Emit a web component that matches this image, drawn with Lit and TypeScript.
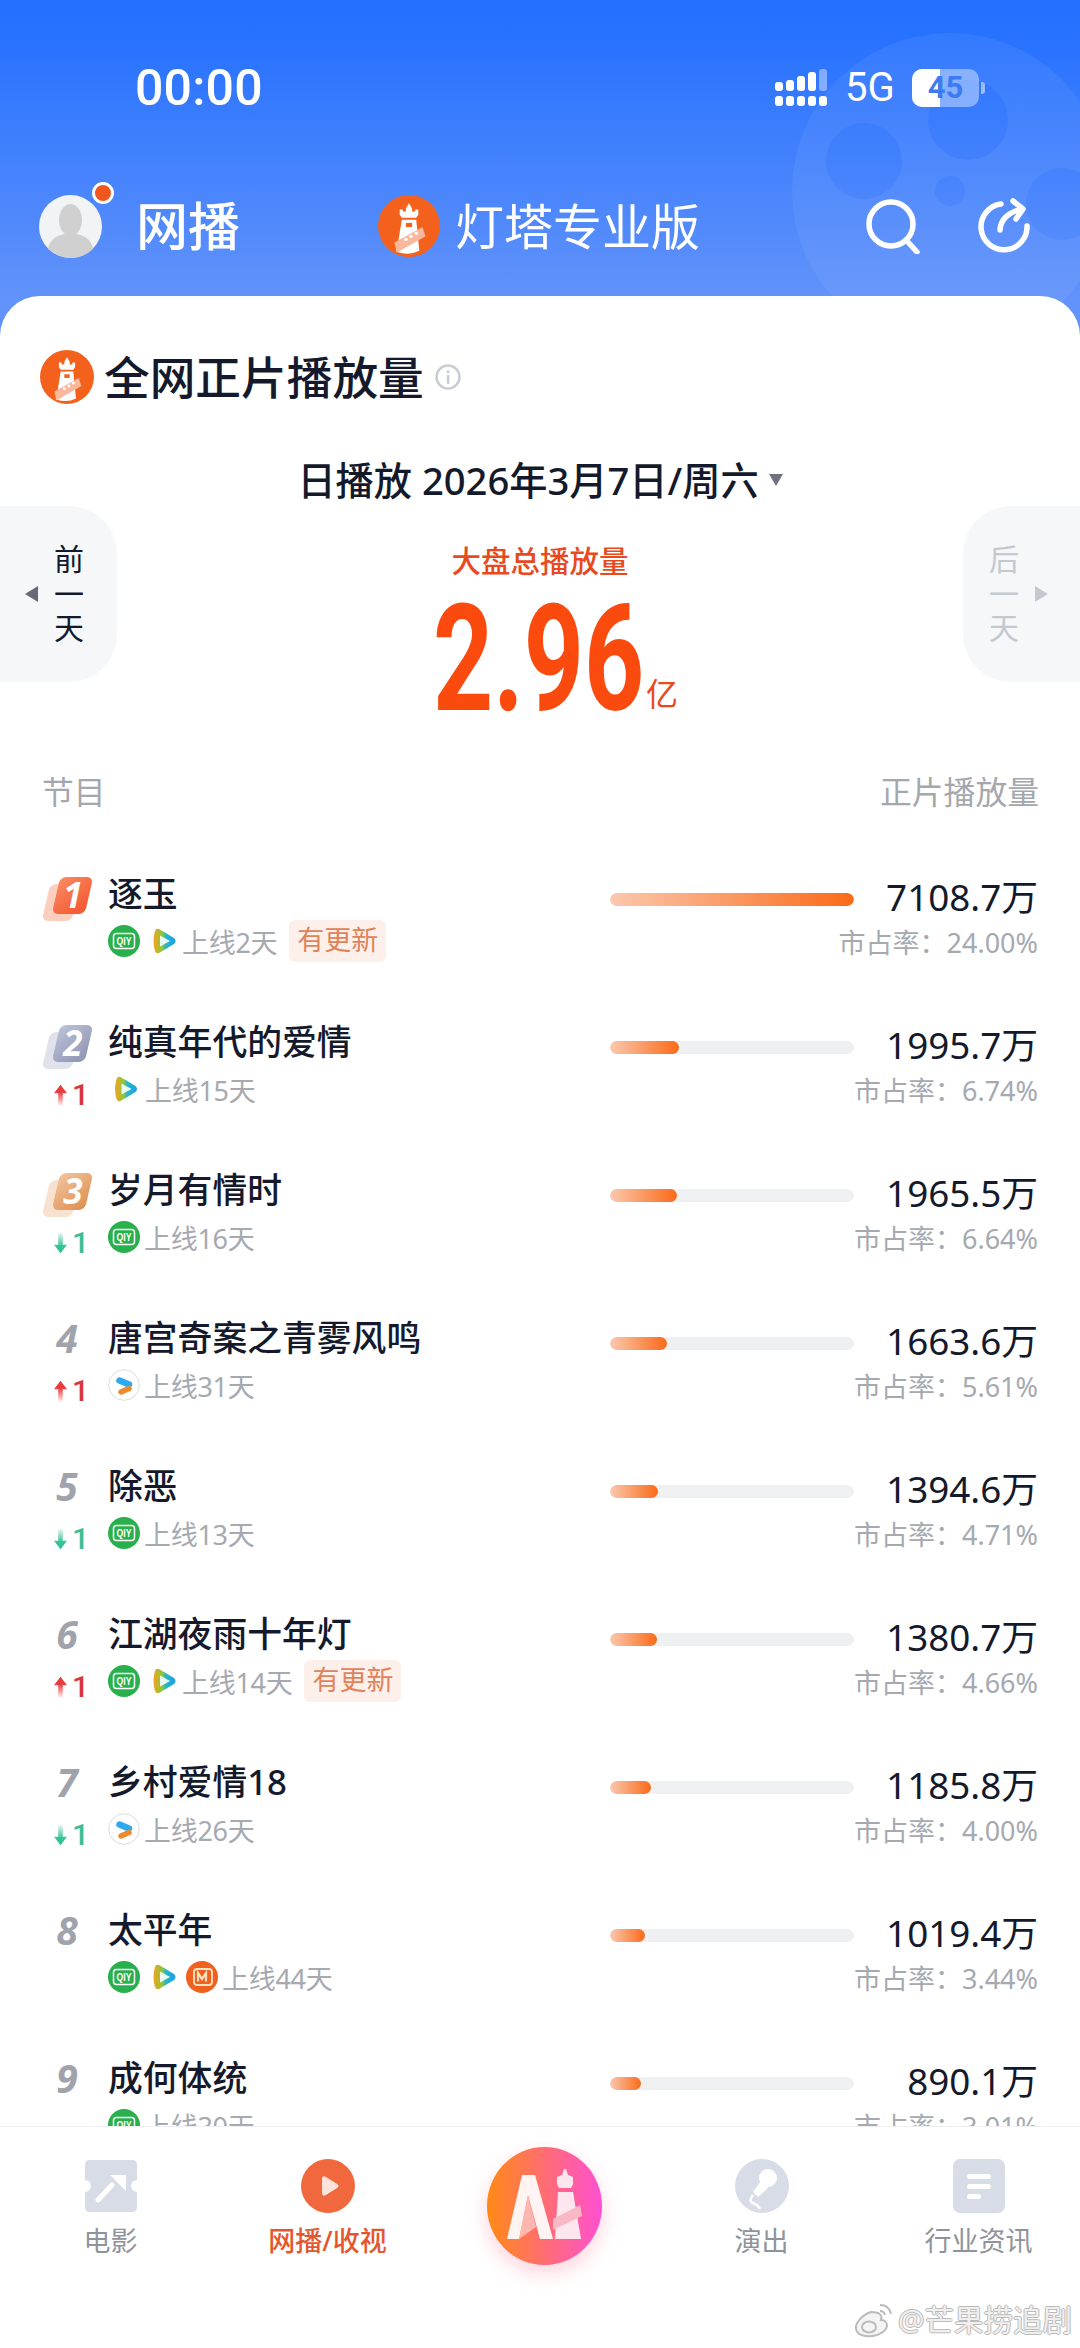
import { LitElement, html, css, svg } from "lit";
import { customElement } from "lit/decorators.js";

type Delta = "up" | "down" | "";
interface Row { rank: number; title: string; icons: string[]; days: number; update?: boolean; delta: Delta; value: number; share: string; }

const rows: Row[] = [
  { rank: 1, title: "逐玉", icons: ["q", "t"], days: 2, update: true, delta: "", value: 7108.7, share: "24.00%" },
  { rank: 2, title: "纯真年代的爱情", icons: ["t"], days: 15, delta: "up", value: 1995.7, share: "6.74%" },
  { rank: 3, title: "岁月有情时", icons: ["q"], days: 16, delta: "down", value: 1965.5, share: "6.64%" },
  { rank: 4, title: "唐宫奇案之青雾风鸣", icons: ["y"], days: 31, delta: "up", value: 1663.6, share: "5.61%" },
  { rank: 5, title: "除恶", icons: ["q"], days: 13, delta: "down", value: 1394.6, share: "4.71%" },
  { rank: 6, title: "江湖夜雨十年灯", icons: ["q", "t"], days: 14, update: true, delta: "up", value: 1380.7, share: "4.66%" },
  { rank: 7, title: "乡村爱情18", icons: ["y"], days: 26, delta: "down", value: 1185.8, share: "4.00%" },
  { rank: 8, title: "太平年", icons: ["q", "t", "m"], days: 44, delta: "", value: 1019.4, share: "3.44%" },
  { rank: 9, title: "成何体统", icons: ["q"], days: 30, delta: "", value: 890.1, share: "3.01%" },
];

const lighthouse = (cls: string) => html`<svg class=${cls} viewBox="0 0 60 60">
  <circle cx="30" cy="30" r="30" fill="#f4611c"/>
  <path d="M21 19V14h3v2h3v-3l3-5 3 5v3h3v-2h3v5l-2 3H23z" fill="#fff"/>
  <path d="M23 24h14l3 30q-10 5-22 1z" fill="#fff"/>
  <path d="M16 46l27-15 3 9-28 16z" fill="#f9b79b"/>
  <circle cx="27" cy="43" r="1.6" fill="#fff"/><circle cx="32" cy="40" r="1.6" fill="#fff"/><circle cx="37" cy="37" r="1.6" fill="#fff"/>
  <rect x="27" y="27" width="6" height="4" fill="#f4611c"/>
</svg>`;

const iqiyi = html`<svg class="pf" viewBox="0 0 32 32"><circle cx="16" cy="16" r="16" fill="#27b04b"/>
  <rect x="5.500" y="8.500" width="21" height="15" rx="3" fill="none" stroke="#fff" stroke-width="1.500"/>
  <text x="16" y="20.300" text-anchor="middle" font-size="11" font-weight="700" font-family="Liberation Sans" fill="#fff" textLength="15" lengthAdjust="spacingAndGlyphs">QIY</text></svg>`;
const tencent = (solo: boolean) => html`<svg class="pf tx ${solo ? "solo" : ""}" viewBox="0 0 30 32">
  <defs><linearGradient id="txg" x1="0" x2="1" y1="0" y2="0"><stop offset="0" stop-color="#f6a21e"/><stop offset=".4" stop-color="#8cc83c"/><stop offset=".55" stop-color="#26b6c8"/><stop offset="1" stop-color="#1e9fe8"/></linearGradient></defs>
  <path d="M7 6q1-3 4-2l15 9q3 3 0 6l-15 9q-3 1-4-2q-3-10 0-20z" fill="url(#txg)"/>
  <path d="M12 10.500l10 5.500-10 5.500z" fill="#eafaf0"/></svg>`;
const youku = html`<svg class="pf" viewBox="0 0 32 32"><circle cx="16" cy="16" r="15.300" fill="#fff" stroke="#dcdcdc" stroke-width="1"/>
  <path d="M11.500 11.500L21 15.500" stroke="#2fa9ee" stroke-width="6.500" stroke-linecap="round"/>
  <path d="M21 19.500L13 23" stroke="#ef8a2c" stroke-width="5.500" stroke-linecap="round"/></svg>`;
const mango = html`<svg class="pf" viewBox="0 0 32 32"><circle cx="16" cy="16" r="16" fill="#f0601e"/>
  <path d="M8 11q0-3 3-3h12q3 0 3 3v10q0 3-3 3H12q-4 0-4-3z" fill="none" stroke="#ffe2c4" stroke-width="1.800"/>
  <path d="M12 20.500V12l4 6 4-6v8.500" fill="none" stroke="#ffe2c4" stroke-width="2.200"/></svg>`;

const reel = svg`<path fill-rule="evenodd" fill="#fff" fill-opacity=".06" d="M158 0a158 158 0 1 0 0 316a158 158 0 1 0 0-316zM176 47a40 40 0 1 1 0 80a40 40 0 1 1 0-80zM72 90a38 38 0 1 1 0 76a38 38 0 1 1 0-76zM158 143a15 15 0 1 1 0 30a15 15 0 1 1 0-30zM270 135a36 36 0 1 1 0 72a36 36 0 1 1 0-72z"/>`;

const arrow = (dir: Delta) => html`<svg class="arrow" viewBox="0 0 14 22">
  <defs>
    <linearGradient id="ua" x1="0" x2="0" y1="0" y2="1"><stop offset=".35" stop-color="#e8393c"/><stop offset="1" stop-color="#e8393c" stop-opacity=".1"/></linearGradient>
    <linearGradient id="da" x1="0" x2="0" y1="1" y2="0"><stop offset=".35" stop-color="#35c296"/><stop offset="1" stop-color="#35c296" stop-opacity=".1"/></linearGradient>
  </defs>
  ${dir === "up"
    ? svg`<path d="M7 0l7 9H9.500v13h-5V9H0z" fill="url(#ua)"/>`
    : svg`<path d="M7 22l7-9H9.500V0h-5v13H0z" fill="url(#da)"/>`}
</svg>`;

@customElement("app-root")
export class AppRoot extends LitElement {
  static styles = css`
    :host { display: block; width: 1080px; height: 2348px; overflow: hidden; font-family: "Noto Sans", "Noto Sans CJK SC", sans-serif; }
    * { box-sizing: border-box; }
    .page { position: relative; width: 1080px; height: 2348px; display: flex; flex-direction: column; overflow: hidden; background: linear-gradient(#2570ff 0, #2872ff 40px, #6293fa 300px, #6293fa 340px) no-repeat; background-size: 100% 340px; }
    .head { flex: 0 0 296px; position: relative; color: #fff; padding-top: 68px; }
    .reel { position: absolute; left: 792px; top: 33px; width: 316px; height: 316px; }
    .status { position: relative; display: flex; align-items: center; height: 40px; padding: 0 95px 0 135px; }
    .time { font: 500 50px/40px Roboto, sans-serif; letter-spacing: .2px; }
    .sright { margin-left: auto; display: flex; align-items: center; }
    .signal { width: 52px; height: 38px; margin-right: 2px; }
    .fiveg { font: 400 40px/40px Roboto, sans-serif; margin-left: 16px; width: 51px; }
    .batt { position: relative; margin-left: 16px; width: 67px; height: 38px; border-radius: 10px; overflow: hidden; background: rgba(255,255,255,.4); }
    .battfill { width: 28px; height: 100%; background: #fff; }
    .batt span { position: absolute; inset: 0; text-align: center; font: 700 31px/38px Roboto, sans-serif; color: #3d7cf0; }
    .cap { width: 4px; height: 12px; margin-left: 2px; background: rgba(255,255,255,.5); border-radius: 0 3px 3px 0; }
    .top { position: relative; display: flex; align-items: center; height: 70px; margin-top: 83px; padding: 0 49px 0 39px; }
    .avatar { position: relative; width: 63px; height: 63px; flex: none; }
    .avatar svg { width: 63px; height: 63px; display: block; }
    .dot { position: absolute; right: -12px; top: -13px; width: 22px; height: 22px; border-radius: 50%; background: #f0561e; border: 3px solid #fff; }
    .tname { font-size: 52px; line-height: 70px; margin-left: 34px; width: 104px; font-weight: 500; letter-spacing: 0; white-space: nowrap; }
    .brand { display: flex; align-items: center; margin-left: 138px; }
    .brandlogo { width: 62px; height: 62px; display: block; }
    .bname { font-size: 49px; line-height: 70px; margin-left: 15px; white-space: nowrap; font-weight: 400; }
    .tools { margin-left: auto; display: flex; gap: 57px; }
    .tool { width: 54px; height: 56px; display: block; }
    .card { flex: 1; min-height: 0; background: #fff; border-radius: 40px 40px 0 0; overflow: hidden; position: relative; padding-top: 54px; }
    .ctitle { display: flex; align-items: center; height: 54px; padding-left: 40px; }
    .ctlogo { width: 54px; height: 54px; display: block; }
    .ct { font-size: 45.700px; font-weight: 500; color: #141a2c; margin-left: 10px; line-height: 54px; white-space: nowrap; }
    .info { width: 26px; height: 26px; margin-left: 11px; display: block; }
    .date { display: flex; justify-content: center; align-items: center; height: 44px; margin-top: 54px; color: #141a2c; font-size: 38.200px; font-weight: 500; line-height: 44px; white-space: pre; }
    .tri { width: 14px; height: 14px; margin-left: 10px; display: block; }
    .hero { display: flex; align-items: flex-start; margin-top: 4px; height: 216px; }
    .tab { flex: none; width: 117px; height: 176px; background: #f6f7f9; display: flex; align-items: center; }
    .tab.l { border-radius: 0 48px 48px 0; padding-left: 25px; gap: 16px; color: #141a2c; }
    .tab.r { border-radius: 48px 0 0 48px; padding-left: 26px; gap: 16px; color: #c4c8cf; }
    .tab svg { width: 13px; height: 16px; display: block; }
    .chars { width: 30px; font-size: 30px; line-height: 34.500px; text-align: center; display: flex; flex-direction: column; }
    .mid { flex: 1; display: flex; flex-direction: column; align-items: center; padding-top: 35px; color: #e8491d; }
    .mlabel { font-size: 29.500px; line-height: 40px; white-space: nowrap; font-weight: 500; }
    .numrow { display: grid; grid-template-columns: 1fr 208px 1fr; width: 100%; margin-top: 13px; height: 130px; }
    .num { grid-column: 2; width: 208px; margin-left: -3px; font: 700 149px/130px Roboto, sans-serif; color: #fb4a0e; white-space: nowrap; transform: scaleX(.705); transform-origin: left center; letter-spacing: 0; }
    .yi { grid-column: 3; align-self: end; font-size: 32px; line-height: 36px; padding-left: 2px; margin-bottom: 12px; }
    .lhead { display: flex; justify-content: space-between; height: 44px; margin-top: 48px; padding: 0 41px 0 42px; color: #a4a7ae; line-height: 44px; font-size: 31.800px; }
    .list { margin-top: 57px; }
    .row { height: 148px; padding: 0 42px; display: grid; grid-template-columns: 66px 1fr 244px 184px; grid-template-rows: 46px 48px; }
    .rank { grid-row: 1; grid-column: 1; position: relative; display: flex; align-items: center; }
    .rnum { width: 50px; text-align: center; font: italic 700 39px/46px "Open Sans", sans-serif; color: #a0a3ab; }
    .badge { position: relative; width: 52px; height: 44px; margin-top: 10px; }
    .back, .front { position: absolute; top: 0; border-radius: 6px; transform: skewX(-13deg); }
    .front { left: 14px; width: 33px; height: 37px; }
    .back { left: 4px; top: 7px; width: 30px; height: 37px; opacity: .45; }
    .bn { position: absolute; left: 16px; top: -1px; width: 30px; text-align: center; font: italic 700 35px/38px "Open Sans", sans-serif; color: #fff; }
    .delta { grid-row: 2; grid-column: 1; display: flex; align-items: center; padding-left: 12px; height: 48px; gap: 5px; font: 500 30px/48px Roboto, sans-serif; margin-top: 6px; }
    .arrow { width: 13px; height: 22px; display: block; }
    .delta.up { color: #d9363e; } .delta.down { color: #3cbf94; }
    .title { grid-row: 1; grid-column: 2; font-size: 34.800px; font-weight: 500; color: #141a2c; line-height: 46px; white-space: nowrap; }
    .sub { grid-row: 2; grid-column: 2; display: flex; align-items: center; gap: 8px; font-size: 27px; color: #a6a9b0; white-space: nowrap; }
    .pf { width: 32px; height: 32px; display: block; flex: none; }
    .tx { width: 30px; }
    .tx.solo { width: 33px; }
    .days { margin-left: -4px; letter-spacing: -.3px; }
    .pill { margin-left: 4px; height: 42px; padding: 0 8px; line-height: 40px; border-radius: 6px; background: #fdf0ea; color: #e0835a; }
    .bar { grid-row: 1; grid-column: 3; align-self: center; margin-top: 10px; height: 13px; border-radius: 7px; background: #eff0f2; overflow: hidden; }
    .fill { height: 100%; border-radius: 7px; background: linear-gradient(90deg, #fbc8ae, #fa6a18); }
    .val { grid-row: 1; grid-column: 4; text-align: right; font-size: 36.800px; line-height: 46px; color: #141a2c; padding-top: 3px; white-space: nowrap; }
    .share { grid-row: 2; grid-column: 3 / 5; text-align: right; font-size: 27px; line-height: 48px; padding-top: 2px; color: #a6a9b0; white-space: nowrap; }
    .nav { flex: 0 0 222px; position: relative; background: #fff; border-top: 1px solid #eceef0; display: grid; grid-template-columns: repeat(5, 217px); margin: 0; padding-left: 2px; }
    .item { display: flex; flex-direction: column; align-items: center; padding-top: 32px; font-size: 27px; line-height: 36px; color: #8f939c; white-space: nowrap; }
    .item svg { width: 54px; height: 54px; display: block; margin-bottom: 10px; }
    .item.on { color: #e4572e; font-weight: 500; }
    .item.ai { padding-top: 20px; }
    .item.ai svg { width: 115px; height: 118px; filter: drop-shadow(0 8px 10px rgba(255,110,140,.3)); }
    .wm { position: absolute; right: 8px; bottom: 8px; display: flex; align-items: center; gap: 4px; font-size: 29.500px; line-height: 40px; color: #f0eeee; text-shadow: -1px 0 #bbb, 1px 0 #bbb, 0 -1px #bbb, 0 1px #bbb; white-space: nowrap; }
    .wm svg { width: 40px; height: 36px; display: block; }
  `;

  private rowTpl(r: Row) {
    const colors: Record<number, [string, string]> = {
      1: ["linear-gradient(135deg,#f98a62,#f4552e)", "#f9926f"],
      2: ["linear-gradient(135deg,#bcc2d6,#8e94b2)", "#b8bdd2"],
      3: ["linear-gradient(135deg,#f2c49c,#dd8e52)", "#f0bd92"],
    };
    const c = colors[r.rank];
    return html`<div class="row">
      <div class="rank">
        ${c
          ? html`<div class="badge"><div class="back" style="background:${c[1]}"></div><div class="front" style="background:${c[0]}"></div><div class="bn">${r.rank}</div></div>`
          : html`<div class="rnum">${r.rank}</div>`}
      </div>
      ${r.delta ? html`<div class="delta ${r.delta}">${arrow(r.delta)}<span>1</span></div>` : ""}
      <div class="title">${r.title}</div>
      <div class="sub">
        ${r.icons.map((i) => i === "q" ? iqiyi : i === "t" ? tencent(r.icons.length === 1) : i === "y" ? youku : mango)}
        <span class="days">上线${r.days}天</span>
        ${r.update ? html`<span class="pill">有更新</span>` : ""}
      </div>
      <div class="bar"><div class="fill" style="width:${(r.value / 7108.7) * 100}%"></div></div>
      <div class="val">${r.value.toFixed(1)}万</div>
      <div class="share">市占率：${r.share}</div>
    </div>`;
  }

  render() {
    return html`<div class="page">
      <div class="head">
        <svg class="reel" viewBox="0 0 316 316">${reel}</svg>
        <div class="status">
          <span class="time">00:00</span>
          <div class="sright">
            <svg class="signal" viewBox="0 0 52 38" fill="#fff">
              <rect x="0" y="13" width="8" height="9" rx="3"/><rect x="0" y="27" width="8" height="10" rx="3"/>
              <rect x="11" y="11" width="8" height="11" rx="3"/><rect x="11" y="27" width="8" height="10" rx="3"/>
              <rect x="22" y="7" width="8" height="15" rx="3"/><rect x="22" y="27" width="8" height="10" rx="3"/>
              <rect x="33" y="3" width="8" height="19" rx="3"/><rect x="33" y="27" width="8" height="10" rx="3"/>
              <rect x="44" y="0" width="8" height="22" rx="3" fill-opacity=".4"/><rect x="44" y="27" width="8" height="10" rx="3"/>
            </svg>
            <span class="fiveg">5G</span>
            <div class="batt"><div class="battfill"></div><span>45</span></div>
            <div class="cap"></div>
          </div>
        </div>
        <div class="top">
          <div class="avatar">
            <svg viewBox="0 0 63 63"><circle cx="31.500" cy="31.500" r="31.500" fill="#f2f3f4"/><ellipse cx="31.500" cy="25" rx="11.500" ry="16" fill="#d0d0d0"/><path d="M9 54q2-12 16-15h13q14 3 16 15q-10 9-22 9t-23-9z" fill="#d0d0d0"/></svg>
            <div class="dot"></div>
          </div>
          <span class="tname">网播</span>
          <div class="brand">${lighthouse("brandlogo")}<span class="bname">灯塔专业版</span></div>
          <div class="tools">
            <svg class="tool" viewBox="0 0 54 56" fill="none" stroke="#fff" stroke-width="5.500" stroke-linecap="round"><circle cx="25" cy="26" r="22"/><path d="M41 43l10 11"/></svg>
            <svg class="tool" viewBox="0 0 54 56" fill="none" stroke="#fff" stroke-width="5.500" stroke-linecap="round" stroke-linejoin="round"><path d="M24 6A23 23 0 1 0 50 28"/><path d="M23 32q1-16 22-21"/><path d="M36 3l10 8-7 10"/></svg>
          </div>
        </div>
      </div>
      <div class="card">
        <div class="ctitle">
          ${lighthouse("ctlogo")}
          <span class="ct">全网正片播放量</span>
          <svg class="info" viewBox="0 0 26 26"><circle cx="13" cy="13" r="11.500" fill="none" stroke="#c8ccd4" stroke-width="2.500"/><rect x="11.800" y="11" width="2.600" height="9" fill="#c8ccd4"/><rect x="11.800" y="6.500" width="2.600" height="2.800" fill="#c8ccd4"/></svg>
        </div>
        <div class="date"><span>日播放 2026年3月7日/周六</span><svg class="tri" viewBox="0 0 14 14"><path d="M0 1h14L7 13z" fill="#70737f"/></svg></div>
        <div class="hero">
          <div class="tab l"><svg viewBox="0 0 13 16"><path d="M13 0v16L0 8z" fill="#666a78"/></svg><div class="chars"><span>前</span><span>一</span><span>天</span></div></div>
          <div class="mid">
            <div class="mlabel">大盘总播放量</div>
            <div class="numrow"><div class="num">2.96</div><div class="yi">亿</div></div>
          </div>
          <div class="tab r"><div class="chars"><span>后</span><span>一</span><span>天</span></div><svg viewBox="0 0 13 16"><path d="M0 0v16l13-8z" fill="#c4c8cf"/></svg></div>
        </div>
        <div class="lhead"><span>节目</span><span>正片播放量</span></div>
        <div class="list">${rows.map((r) => this.rowTpl(r))}</div>
      </div>
      <div class="nav">
        <div class="item"><svg viewBox="0 0 54 54"><path d="M6 1h42q5 0 5 5v15a6 6 0 0 0 0 12v15q0 5-5 5H6q-5 0-5-5V33a6 6 0 0 0 0-12V6q0-5 5-5z" fill="#d8dce6"/><path d="M14 41l14-15" fill="none" stroke="#fff" stroke-width="5" stroke-linecap="round"/><path d="M26 16h16v16z" fill="#fff"/></svg>电影</div>
        <div class="item on"><svg viewBox="0 0 54 54"><circle cx="27" cy="27" r="27" fill="#f2683e"/><path d="M21 20q0-4 4-2l11 7q3 2 0 4l-11 7q-4 2-4-2z" fill="#fde3da"/></svg>网播/收视</div>
        <div class="item ai"><svg viewBox="0 0 115 118">
          <defs><linearGradient id="aig" x1="0" x2="1" y1="0" y2="0"><stop offset="0" stop-color="#ff8a14"/><stop offset="1" stop-color="#ff50d2"/></linearGradient></defs>
          <ellipse cx="57.500" cy="59" rx="57.500" ry="59" fill="url(#aig)"/>
          <path d="M20 92L35 28h13l18 64H53L41 48 32 92z" fill="#fff" fill-opacity=".92"/>
          <path d="M32 92l9-44 8 32z" fill="#fcd2d6" fill-opacity=".7"/>
          <path d="M70 37v-7l5-2 2-6h2l2 6 5 2v7l-2 4H72z" fill="#fde6ee"/>
          <path d="M71 45h15l8 47H68z" fill="#fde6ee"/>
          <path d="M66 72l27-14 2 11-29 14z" fill="#f9b8c6"/>
        </svg></div>
        <div class="item"><svg viewBox="0 0 54 54"><circle cx="27" cy="27" r="27" fill="#d8dce6"/><circle cx="33" cy="19" r="9" fill="#fff"/><path d="M26 22l7 7-10 9-5-5z" fill="#fff"/><path d="M18 36q-5 6 0 8t7 6" fill="none" stroke="#fff" stroke-width="2.500"/></svg>演出</div>
        <div class="item"><svg viewBox="0 0 54 54"><rect x="1" y="0" width="52" height="54" rx="7" fill="#d8dce6"/><rect x="15" y="15" width="24" height="5" rx="2.500" fill="#fff"/><rect x="15" y="25" width="24" height="5" rx="2.500" fill="#fff"/><rect x="15" y="35" width="14" height="5" rx="2.500" fill="#fff"/></svg>行业资讯</div>
      </div>
      <div class="wm">
        <svg viewBox="0 0 40 36" fill="none" stroke="#bbb" stroke-width="2"><path d="M17 10C8 13 1 21 2 27c1 6 9 8 16 7 9-1 15-6 15-11 0-4-4-5-6-5 2-6-3-8-10-8z" fill="#f4f4f4"/><ellipse cx="15" cy="25" rx="7" ry="5.500"/><path d="M26 3q9 0 11 9M26 9q4 0 5 4"/></svg>
        <span>@芒果捞追剧</span>
      </div>
    </div>`;
  }
}
